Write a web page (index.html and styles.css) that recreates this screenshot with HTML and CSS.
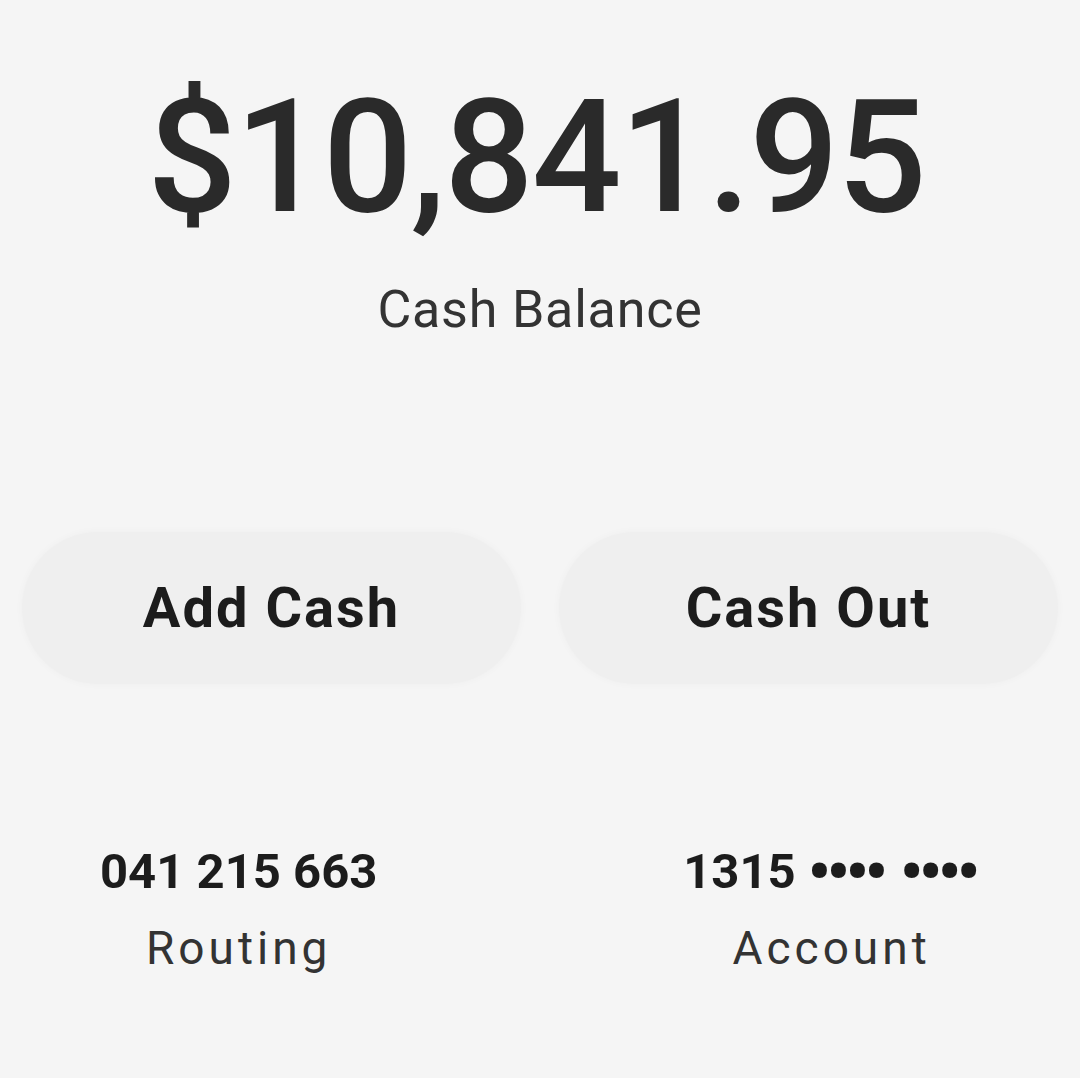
FILE: index.html
```html
<!DOCTYPE html>
<html lang="en">
<head>
  <meta charset="UTF-8" />
  <meta name="viewport" content="width=device-width, initial-scale=1" />
  <title>Cash Balance</title>
  <link rel="stylesheet" href="styles.css">
</head>
<body>
<main class="screen">
  <section class="balance">
    <h1 class="amount">$10,841.95</h1>
    <p class="caption">Cash Balance</p>
  </section>

  <div class="actions">
    <button class="pill">Add Cash</button>
    <button class="pill">Cash Out</button>
  </div>

  <div class="details">
    <div class="detail">
      <p class="number">041 215 663</p>
      <p class="label">Routing</p>
    </div>
    <div class="detail">
      <p class="number">1315 <span class="dots">••••</span> <span class="dots">••••</span></p>
      <p class="label">Account</p>
    </div>
  </div>
</main>
</body>
</html>
```

FILE: styles.css
```css
html,
body {
  margin: 0;
  background-color: #f5f5f5;
}

body {
  font-family: Roboto, "Liberation Sans", Arial, sans-serif;
  color: #2b2b2b;
}

.screen {
  height: 1078px;
  overflow: hidden;
}

p,
h1 {
  margin: 0;
}

.balance {
  text-align: center;
  padding-top: 64px;
}
.amount {
  font-size: 158px;
  font-weight: 500;
  line-height: 186px;
  letter-spacing: -2px;
  margin-right: 8px;
  color: #2a2a2a;
}
.caption {
  font-size: 52px;
  font-weight: 400;
  line-height: 60px;
  letter-spacing: 0.8px;
  color: #333;
  margin-top: 30px;
}

.actions {
  display: flex;
  gap: 38px;
  padding: 0 22px;
  margin-top: 192px;
}
.pill {
  flex: 1;
  height: 152px;
  border: none;
  border-radius: 76px;
  background-color: #efefef;
  box-shadow: 0 0 6px 2px rgba(0, 0, 0, 0.02);
  font-family: inherit;
  font-size: 56px;
  font-weight: 700;
  letter-spacing: 2px;
  color: #1c1c1c;
  padding: 0;
}

.details {
  display: flex;
  justify-content: space-between;
  padding: 0 100px;
  margin-top: 160px;
}
.detail {
  text-align: center;
}
.number {
  font-size: 49px;
  font-weight: 700;
  line-height: 56px;
  color: #1c1c1c;
  white-space: nowrap;
}
.dots {
  font-size: 64px;
  line-height: 0;
  letter-spacing: -4px;
  margin-right: 4px;
  vertical-align: -6px;
}
.label {
  font-size: 46px;
  font-weight: 400;
  line-height: 56px;
  letter-spacing: 4px;
  color: #333;
  margin-top: 20px;
}
```
